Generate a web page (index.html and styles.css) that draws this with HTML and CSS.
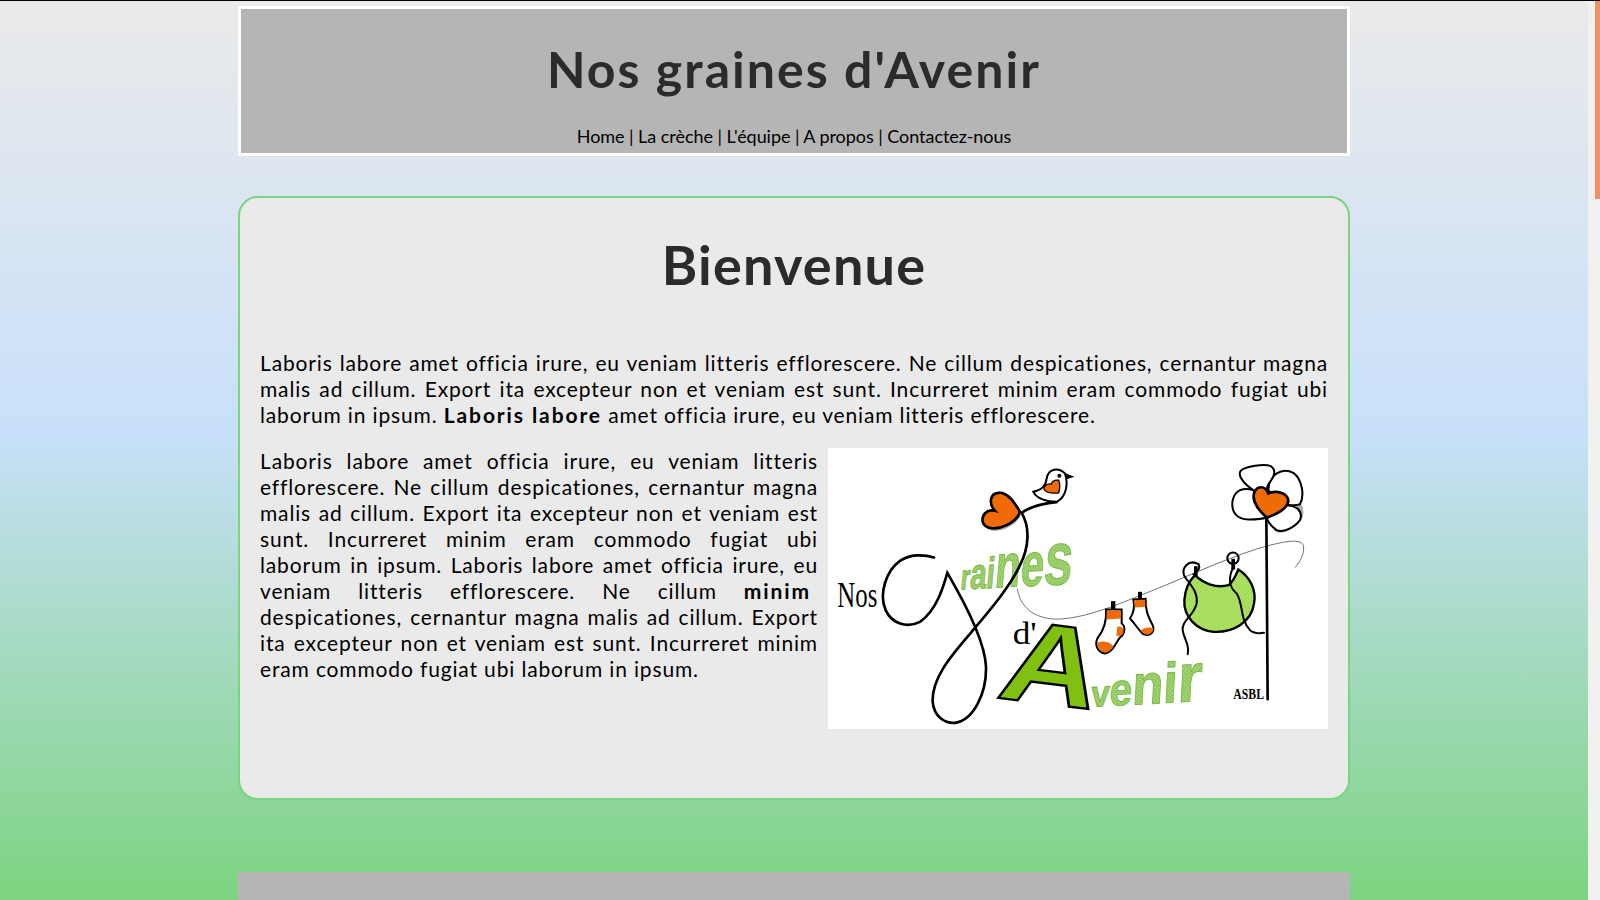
FILE: index.html
```html
<!DOCTYPE html>
<html lang="fr">
<head>
  <meta charset="UTF-8">
  <title>Nos graines d'Avenir</title>
  <link rel="stylesheet" href="styles.css">
</head>
<body>
  <div class="page">
    <div class="wrap">
      <header class="header">
        <h1>Nos graines d'Avenir</h1>
        <nav class="nav">
          <a href="#">Home</a> | <a href="#">La crèche</a> | <a href="#">L'équipe</a> | <a href="#">A propos</a> | <a href="#">Contactez-nous</a>
        </nav>
      </header>

      <main class="card">
        <h2>Bienvenue</h2>
        <p>Laboris labore amet officia irure, eu veniam litteris efflorescere. Ne cillum despicationes, cernantur magna malis ad cillum. Export ita excepteur non et veniam est sunt. Incurreret minim eram commodo fugiat ubi laborum in ipsum. <strong>Laboris labore</strong> amet officia irure, eu veniam litteris efflorescere.</p>

        <svg class="logo" viewBox="24 24 1500 842" role="img" aria-label="Logo Nos Graines d'Avenir">
          <defs>
            <pattern id="dots" width="13" height="13" patternUnits="userSpaceOnUse">
              <rect width="13" height="13" fill="#8fc95a"/>
              <circle cx="4" cy="4" r="1.8" fill="#e6f5d4"/>
              <circle cx="10.5" cy="10.5" r="1.8" fill="#e6f5d4"/>
            </pattern>
            <pattern id="bibdots" width="12" height="12" patternUnits="userSpaceOnUse">
              <rect width="12" height="12" fill="#a3dc55"/>
              <circle cx="3" cy="3" r="1.5" fill="#dcf3bb"/>
              <circle cx="9" cy="9" r="1.5" fill="#dcf3bb"/>
            </pattern>
          </defs>

          <!-- corde a linge -->
          <path class="line" d="M592,445 C600,500 640,535 710,537 C800,535 900,490 1000,450 C1100,410 1250,340 1350,315 C1400,303 1440,295 1450,315 C1455,340 1440,365 1425,382"/>

          <!-- lettres vertes -->
          <text class="big-a" transform="translate(525,772) rotate(7) skewX(-8)" font-size="345" textLength="292" lengthAdjust="spacingAndGlyphs">A</text>
          <text class="green-txt" transform="translate(420,448) rotate(-3) skewX(-8) scale(.68,1)"><tspan font-size="105">r</tspan><tspan font-size="130">a</tspan><tspan font-size="130">i</tspan><tspan font-size="185">n</tspan><tspan font-size="185">e</tspan><tspan font-size="225">s</tspan></text>
          <text class="green-txt" transform="translate(812,800) rotate(-3) skewX(-6) scale(.9,1)"><tspan font-size="110">v</tspan><tspan font-size="135">e</tspan><tspan font-size="170">n</tspan><tspan font-size="170">i</tspan><tspan font-size="210">r</tspan></text>

          <!-- arabesque du G -->
          <path class="swirl" d="M710,186 C670,190 630,200 605,218 C630,260 628,320 600,375 C570,440 510,510 455,575 C400,640 335,710 338,785 C342,830 375,850 405,848 C460,840 500,760 498,680 C495,600 430,480 382,398 C370,440 350,510 300,545 C260,565 215,550 197,510 C175,460 200,390 240,362 C270,342 310,342 342,352"/>

          <!-- coeur et oiseau -->
          <path class="shadow" d="M604,222 C584,187 564,162 539,165 C514,167 509,197 529,219 C504,212 489,232 492,252 C499,275 534,277 564,262 C584,252 599,237 604,222Z"/>
          <path class="heart" d="M600,215 C580,180 560,155 535,158 C510,160 505,190 525,212 C500,205 485,225 488,245 C495,268 530,270 560,255 C580,245 595,230 600,215Z"/>
          <path class="petal" d="M735,100 C715,80 685,85 680,115 C678,135 665,150 640,155 C650,175 680,185 710,185 C740,170 745,130 735,100Z"/>
          <path class="ink" d="M733,98 L763,110 L738,118Z"/>
          <circle class="ink" cx="718" cy="107" r="6"/>
          <path class="heart thin" d="M716,120 C700,118 695,128 694,132 C680,128 670,140 672,148 C680,160 705,160 716,158 C720,145 720,130 716,120Z"/>

          <!-- chaussettes -->
          <rect class="ink" x="873" y="483" width="13" height="30"/>
          <path class="petal" d="M858,508 L905,508 L905,550 C918,560 915,580 900,592 C885,610 880,635 855,640 C830,635 822,610 835,590 C855,565 860,540 858,508Z"/>
          <path class="fill-or" d="M860,511 L903,511 L903,535 L860,538Z"/>
          <path class="fill-or" d="M832,608 C850,600 870,606 880,618 C872,632 865,636 855,637 C840,634 832,622 832,608Z"/>
          <path class="fill-or" d="M892,560 C905,555 912,565 910,578 C906,588 895,590 889,586Z"/>
          <rect class="ink" x="954" y="455" width="12" height="30"/>
          <path class="petal" d="M940,478 L977,476 C975,510 985,530 998,555 C1006,575 990,590 970,582 C955,570 945,550 930,535 C940,520 945,500 940,478Z"/>
          <path class="fill-or" d="M942,480 L975,478 L976,500 L944,502Z"/>
          <path class="fill-or" d="M962,572 C975,560 990,560 1000,566 C1000,578 985,588 972,581Z"/>

          <!-- bavoir -->
          <path class="bib" d="M1125,405 C1150,430 1190,445 1225,435 C1240,425 1250,400 1255,388 C1290,410 1310,450 1302,490 C1295,545 1240,578 1180,575 C1130,570 1090,530 1093,480 C1095,450 1105,425 1125,405Z"/>
          <path class="string" d="M1135,372 C1105,355 1085,385 1092,405 C1105,430 1135,450 1130,490 C1120,530 1085,540 1088,570 C1092,600 1110,610 1103,642"/>
          <path class="string" d="M1136,372 C1142,385 1132,395 1120,403"/>
          <circle class="string" cx="1239" cy="354" r="17"/>
          <path class="string" d="M1240,382 C1225,410 1225,440 1250,460 C1270,490 1260,540 1290,570 C1305,582 1320,580 1332,578"/>
          <rect class="ink" x="1122" y="378" width="11" height="32"/>
          <rect class="ink" x="1234" y="356" width="11" height="32"/>

          <!-- fleur -->
          <path class="stem" d="M1339,232 L1343,777"/>
          <path class="shadow" d="M1442,190 C1458,215 1450,245 1420,262 C1395,280 1375,282 1360,270 L1400,220Z"/>
          <path class="petal" d="M1400,195 C1430,195 1450,215 1440,240 C1425,260 1390,280 1370,270 C1355,260 1345,245 1340,235Z"/>
          <path class="petal" d="M1300,150 C1270,140 1245,150 1238,180 C1232,215 1250,240 1290,238 C1310,238 1330,235 1340,232Z"/>
          <path class="petal" d="M1345,150 C1345,105 1385,80 1420,98 C1445,115 1455,165 1440,192 C1425,198 1400,195 1385,190Z"/>
          <path class="petal" d="M1300,150 C1270,130 1252,105 1262,92 C1275,78 1335,70 1352,78 C1368,88 1365,105 1352,122 C1342,135 1340,145 1340,152Z"/>
          <path class="heart" d="M1340,232 C1320,215 1295,185 1302,160 C1310,135 1335,135 1345,160 C1365,150 1400,155 1405,180 C1405,205 1365,225 1340,232Z"/>

          <!-- textes noirs -->
          <text class="serif" x="52" y="502" font-size="106" textLength="120" lengthAdjust="spacingAndGlyphs">Nos</text>
          <text class="serif" x="578" y="612" font-size="96" textLength="72" lengthAdjust="spacingAndGlyphs">d'</text>
          <text class="serif strong" x="1240" y="777" font-size="41" textLength="92" lengthAdjust="spacingAndGlyphs">ASBL</text>
        </svg>

        <p class="p2">Laboris labore amet officia irure, eu veniam litteris efflorescere. Ne cillum despicationes, cernantur magna malis ad cillum. Export ita excepteur non et veniam est sunt. Incurreret minim eram commodo fugiat ubi laborum in ipsum. Laboris labore amet officia irure, eu veniam litteris efflorescere. Ne cillum <strong>minim&nbsp;</strong> despicationes, cernantur magna malis ad cillum. Export ita excepteur non et veniam est sunt. Incurreret minim eram commodo fugiat ubi laborum in ipsum.</p>
      </main>

      <footer class="footer"></footer>
    </div>
  </div>
  <div class="scrollbar"><div class="thumb"></div></div>
</body>
</html>
```
FILE: styles.css
```css
html, body {
  height: 100%;
}
body {
  margin: 0;
  overflow: hidden;
  display: flex;
  border-top: 1px solid #000;
  box-sizing: border-box;
  font-family: Lato, sans-serif;
  color: #000;
}
.page {
  flex: 1;
  overflow: hidden;
  background: linear-gradient(#eaeaea 0, #c8e0fa 48%, #7dd480 100%);
}
.wrap {
  width: 1112px;
  margin-left: 238px;
  padding-top: 5px;
}
.header {
  height: 150px;
  box-sizing: border-box;
  border: 3px solid #fff;
  background-color: #b5b5b5;
  text-align: center;
}
h1 {
  margin: 0;
  padding-top: 30px;
  font-size: 50px;
  line-height: 60px;
  letter-spacing: 2.05px;
  color: #2b2b2b;
}
.nav {
  margin-top: 26px;
  font-size: 18px;
  line-height: 22px;
  letter-spacing: -0.05px;
}
.nav a {
  color: #000;
  text-decoration: none;
}
.card {
  display: flow-root;
  height: 604px;
  margin-top: 40px;
  box-sizing: border-box;
  border: 2px solid #7ad57f;
  border-radius: 20px;
  background-color: #eaeaea;
  padding: 0 20px;
}
h2 {
  margin: 33px 0 51px;
  text-align: center;
  font-size: 54px;
  line-height: 68px;
  letter-spacing: 1.2px;
  color: #2b2b2b;
}
p {
  margin: 0 0 20px;
  font-size: 21px;
  line-height: 26px;
  letter-spacing: 0.85px;
  text-align: justify;
}
strong {
  letter-spacing: 1.9px;
}
.logo {
  float: right;
  width: 500px;
  height: 281px;
  margin-left: 10px;
  background-color: #fff;
}
.footer {
  height: 100px;
  margin-top: 72px;
  background-color: #b5b5b5;
}
.scrollbar {
  width: 12px;
  background-color: #f1f1ef;
}
.thumb {
  width: 5px;
  height: 198px;
  margin-left: 7px;
  background-color: #f28f68;
}

/* logo */
.line {
  fill: none;
  stroke: #555;
  stroke-width: 2.5;
}
.swirl, .string, .stem {
  fill: none;
  stroke: #000;
  stroke-width: 8;
  stroke-linecap: round;
}
.string {
  stroke-width: 6;
}
.heart {
  fill: #f06a05;
  stroke: #000;
  stroke-width: 8;
}
.heart.thin {
  stroke-width: 4;
}
.petal {
  fill: #fff;
  stroke: #000;
  stroke-width: 6;
}
.shadow {
  fill: #a9a6b0;
}
.ink {
  fill: #000;
}
.fill-or {
  fill: #f06a05;
}
.bib {
  fill: url(#bibdots);
  stroke: #000;
  stroke-width: 7;
}
.green-txt {
  font-family: "Liberation Sans", sans-serif;
  font-weight: bold;
  fill: url(#dots);
  stroke: #7cb648;
  stroke-width: 3;
}
.big-a {
  font-family: "Liberation Sans", sans-serif;
  font-weight: bold;
  fill: #7fc010;
  stroke: #000;
  stroke-width: 7;
}
.serif {
  font-family: "Liberation Serif", serif;
  fill: #000;
}
.strong {
  font-weight: bold;
}
```
